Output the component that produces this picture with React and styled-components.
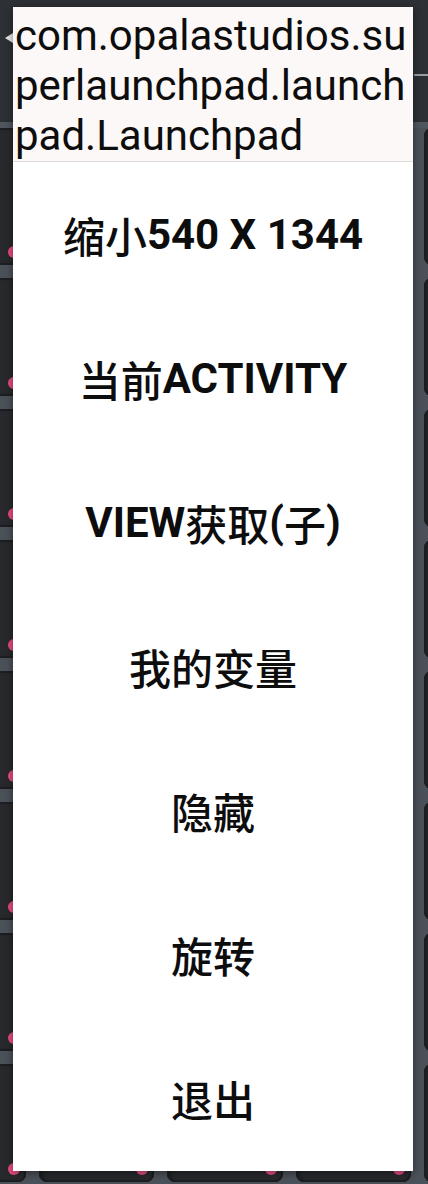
import styled, { createGlobalStyle } from 'styled-components';

const GlobalStyle = createGlobalStyle`
    body {
        margin: 0;
        background: #2d3034;
    }
`;

// each item split so the CJK part can take a lighter weight than the latin part
const menuItems = [
    [['缩小', true], ['540 X 1344', false]],
    [['当前', true], ['ACTIVITY', false]],
    [['VIEW', false], ['获取', true], ['(', false], ['子', true], [')', false]],
    [['我的变量', true]],
    [['隐藏', true]],
    [['旋转', true]],
    [['退出', true]],
];

const titleLines = ['com.opalastudios.su', 'perlaunchpad.launch', 'pad.Launchpad'];

const rowHeights = [137, 118, 118, 118, 118, 118, 118, 118];

function App() {
    return (
        <Screen>
            <GlobalStyle />
            <Header>
                <BackArrow />
                <SideLine />
            </Header>
            <Band />
            <Rows>
                {rowHeights.map((h, r) => (
                    <PadRow key={r} $height={h}>
                        {[0, 1, 2, 3, 4].map((c) => (
                            <Pad key={c}>
                                <Dot />
                            </Pad>
                        ))}
                    </PadRow>
                ))}
            </Rows>

            <Dialog>
                <Title>
                    {titleLines.map((line) => (
                        <TitleLine key={line}>{line}</TitleLine>
                    ))}
                </Title>
                <Menu>
                    {menuItems.map((parts, i) => (
                        <MenuItem key={i}>
                            {parts.map(([text, cjk], j) => (
                                <Part key={j} $cjk={cjk}>
                                    {text}
                                </Part>
                            ))}
                        </MenuItem>
                    ))}
                </Menu>
            </Dialog>
        </Screen>
    );
}

export default App;

const Screen = styled.div`
    position: relative;
    width: 428px;
    height: 1184px;
    overflow: hidden;
    background: #4b5159;
`;

const Header = styled.div`
    height: 122px;
    background: #2d3034;
    display: flex;
    justify-content: space-between;
    align-items: flex-start;
`;

const BackArrow = styled.div`
    margin-top: 33px;
    margin-left: 5px;
    width: 0;
    height: 0;
    border-top: 5px solid transparent;
    border-bottom: 5px solid transparent;
    border-right: 8px solid #e8e8e8;
`;

const SideLine = styled.div`
    margin-top: 74px;
    width: 14px;
    height: 2px;
    background: #9a9ea3;
`;

const Band = styled.div`
    height: 6px;
    background: #50565e;
`;

const Rows = styled.div`
    display: flex;
    flex-direction: column;
    gap: 13px;
`;

const PadRow = styled.div`
    height: ${(p) => p.$height}px;
    margin-left: -90px;
    display: grid;
    grid-template-columns: repeat(5, 115.5px);
    column-gap: 13px;
`;

const Pad = styled.div`
    position: relative;
    background: #27292d;
    border-radius: 8px;
    box-shadow: inset 0 0 0 2px #1c1e21, inset 3px 0 4px rgba(0, 0, 0, 0.35);
`;

const Dot = styled.span`
    position: absolute;
    right: 6px;
    bottom: 7px;
    width: 12px;
    height: 12px;
    border-radius: 50%;
    background: #ea4c7f;
`;

const Dialog = styled.div`
    position: absolute;
    top: 7px;
    left: 13px;
    width: 400px;
    height: 1164px;
    background: #ffffff;
    box-shadow: 0 2px 8px rgba(0, 0, 0, 0.45);
    display: flex;
    flex-direction: column;
`;

const Title = styled.div`
    background: #fcf8f7;
    padding: 4px 4px 0 2px;
    border-bottom: 1px solid #dedad9;
    font-family: Roboto, 'Noto Sans', sans-serif;
    font-size: 42px;
    line-height: 50px;
    color: #0d0d0d;
`;

const TitleLine = styled.div`
    white-space: nowrap;
`;

const Menu = styled.div`
    display: flex;
    flex-direction: column;
`;

const MenuItem = styled.div`
    height: 144px;
    display: flex;
    align-items: center;
    justify-content: center;
    font-family: Roboto, 'Noto Sans CJK SC', sans-serif;
    font-size: 42px;
    color: #0d0d0d;
    white-space: pre;
`;

const Part = styled.span`
    font-weight: ${(p) => (p.$cjk ? 500 : 700)};
`;
